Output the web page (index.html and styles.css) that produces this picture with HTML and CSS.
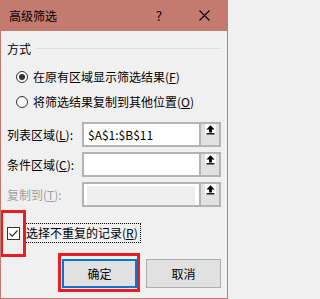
FILE: index.html
```html
<!DOCTYPE html>
<html lang="zh-CN">
<head>
<meta charset="utf-8">
<title>高级筛选</title>
<link rel="stylesheet" href="styles.css">
</head>
<body>
<div class="window">
  <div class="titlebar">
    <span class="title">高级筛选</span>
    <span class="help">?</span>
    <span class="close"><svg width="11" height="11" viewBox="0 0 11 11"><path d="M0.5 0.5 L10.5 10.5 M10.5 0.5 L0.5 10.5" stroke="#000" stroke-width="1.1" fill="none"/></svg></span>
  </div>
  <div class="content">
    <div class="group-head"><span>方式</span><span class="rule"></span></div>
    <div class="radio-row first"><span class="radio checked"></span><span>在原有区域显示筛选结果(<u>F</u>)</span></div>
    <div class="radio-row"><span class="radio"></span><span>将筛选结果复制到其他位置(<u>O</u>)</span></div>
    <div class="fields">
      <div class="field">
        <span class="label">列表区域(<u>L</u>):</span>
        <div class="ref">
          <div class="ref-text">$A$1:$B$11</div>
          <div class="ref-btn"><svg width="11" height="11" viewBox="0 0 11 11"><rect width="11" height="11" fill="#fff"/><path d="M5.5 1.2 L9.6 5.4 H6.9 V8.4 H4.1 V5.4 H1.4 Z" fill="#000"/><rect x="1.5" y="9.1" width="8" height="1.4" fill="#000"/></svg></div>
        </div>
      </div>
      <div class="field">
        <span class="label">条件区域(<u>C</u>):</span>
        <div class="ref">
          <div class="ref-text"></div>
          <div class="ref-btn"><svg width="11" height="11" viewBox="0 0 11 11"><rect width="11" height="11" fill="#fff"/><path d="M5.5 1.2 L9.6 5.4 H6.9 V8.4 H4.1 V5.4 H1.4 Z" fill="#000"/><rect x="1.5" y="9.1" width="8" height="1.4" fill="#000"/></svg></div>
        </div>
      </div>
      <div class="field disabled">
        <span class="label">复制到(<u>T</u>):</span>
        <div class="ref">
          <div class="ref-text"><div class="ref-fill"></div></div>
          <div class="ref-btn"><svg width="11" height="11" viewBox="0 0 11 11"><rect width="11" height="11" fill="#fff"/><path d="M5.5 1.2 L9.6 5.4 H6.9 V8.4 H4.1 V5.4 H1.4 Z" fill="#000"/><rect x="1.5" y="9.1" width="8" height="1.4" fill="#000"/></svg></div>
        </div>
      </div>
    </div>
    <div class="check-row">
      <span class="check"><svg width="11" height="11" viewBox="0 0 11 11"><path d="M1.5 5.5 L4.2 8.2 L9.5 2.5" stroke="#333" stroke-width="1.2" fill="none"/></svg></span>
      <span class="check-label">选择不重复的记录(<u>R</u>)</span>
    </div>
    <div class="buttons">
      <button class="btn primary">确定</button>
      <button class="btn">取消</button>
    </div>
  </div>
  <div class="mark mark-check"></div>
  <div class="mark mark-ok"></div>
</div>
</body>
</html>
```
FILE: styles.css
```css
html, body {
  margin: 0;
  padding: 0;
  background: #f0f0f0;
}
body {
  font-family: "Noto Sans CJK SC", "Noto Sans", sans-serif;
  font-size: 12px;
  color: #000;
}
.window {
  position: relative;
  width: 228px;
  height: 299px;
  box-sizing: border-box;
  border: 1px solid #c57a70;
  border-top: 0;
  background: #f0f0f0;
  overflow: hidden;
}
.titlebar {
  height: 31px;
  background: #c57a70;
  display: flex;
  align-items: center;
  padding-left: 8px;
  padding-right: 17px;
}
.title {
  flex: 1;
  line-height: 16px;
}
.help {
  font-size: 13px;
  line-height: 16px;
  margin-right: 37px;
}
.close {
  display: flex;
  width: 11px;
  height: 11px;
}
.content {
  padding: 0 6px;
}
.group-head {
  display: flex;
  align-items: center;
  height: 17px;
  line-height: 17px;
  margin-top: 9px;
}
.rule {
  flex: 1;
  height: 1px;
  background: #dcdcdc;
  margin-left: 5px;
}
.radio-row {
  display: flex;
  align-items: center;
  height: 25px;
  line-height: 17px;
}
.radio-row.first {
  margin-top: 7px;
}
.radio {
  box-sizing: border-box;
  width: 12px;
  height: 12px;
  border: 1px solid #333;
  border-radius: 50%;
  background: #fff;
  margin-left: 9px;
  margin-right: 5px;
  display: flex;
  align-items: center;
  justify-content: center;
}
.radio.checked::after {
  content: "";
  width: 6px;
  height: 6px;
  border-radius: 50%;
  background: #333;
}
u {
  text-decoration: underline;
  text-underline-offset: 1px;
}
.fields {
  display: flex;
  flex-direction: column;
  gap: 5px;
  margin-top: 8px;
}
.field {
  display: flex;
  align-items: center;
  height: 25px;
}
.label {
  width: 75px;
  line-height: 17px;
}
.field.disabled .label {
  color: #a0a0a0;
}
.ref {
  flex: 1;
  display: flex;
  height: 25px;
  box-sizing: border-box;
  border: 2px solid #b4b4b4;
}
.ref-text {
  flex: 1;
  background: #fff;
  line-height: 21px;
  padding-left: 4px;
  border-right: 2px solid #b4b4b4;
  display: flex;
  align-items: center;
}
.field.disabled .ref-text {
  padding: 2px 4px 0 3px;
  align-items: stretch;
}
.ref-fill {
  flex: 1;
  background: #efefef;
}
.ref-btn {
  width: 18px;
  background: #e1e1e1;
  display: flex;
  justify-content: center;
  align-items: flex-start;
}
.ref-btn svg {
  display: block;
}
.check-row {
  display: flex;
  align-items: center;
  height: 20px;
  margin-top: 16px;
}
.check {
  box-sizing: border-box;
  width: 13px;
  height: 13px;
  border: 1px solid #333;
  background: #fff;
  display: flex;
  align-items: center;
  justify-content: center;
  margin-right: 3px;
}
.check svg {
  display: block;
}
.check-label {
  border: 1px dotted #000;
  padding: 0 2px;
  line-height: 18px;
}
.buttons {
  display: flex;
  justify-content: flex-end;
  gap: 9px;
  margin-top: 16px;
}
.btn {
  width: 75px;
  height: 29px;
  box-sizing: border-box;
  border: 1px solid #adadad;
  background: #e1e1e1;
  font-family: inherit;
  font-size: 12px;
  color: #000;
  padding: 0;
  line-height: 17px;
}
.btn.primary {
  border: 2px solid #0078d7;
}
.mark {
  position: absolute;
  box-sizing: border-box;
  border: 3px solid #ec1c24;
}
.mark-check {
  left: -1px;
  top: 210px;
  width: 26px;
  height: 47px;
}
.mark-ok {
  left: 57px;
  top: 253px;
  width: 82px;
  height: 39px;
}
```
